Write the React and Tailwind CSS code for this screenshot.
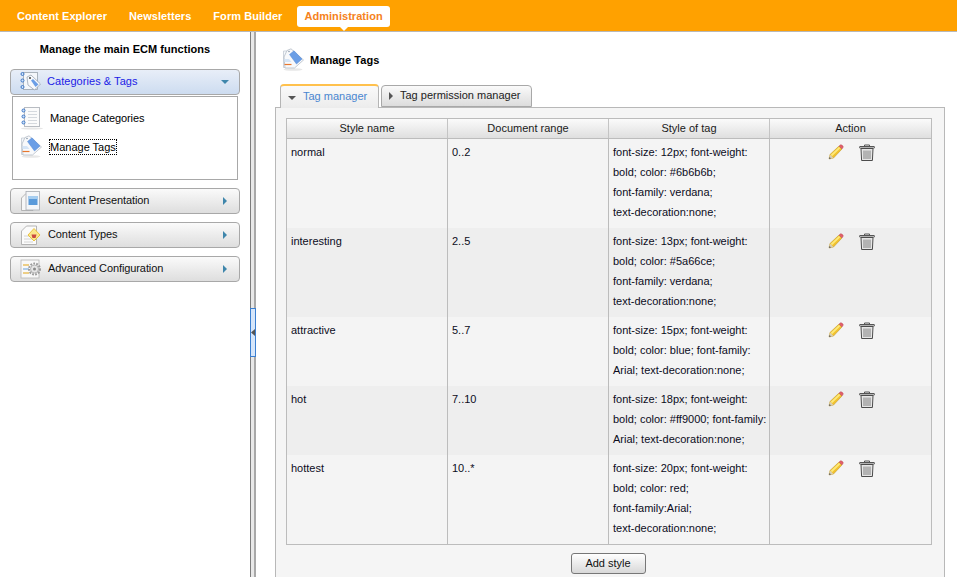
const rows = [
  { name: "normal", range: "0..2", lines: ["font-size: 12px; font-weight:", "bold; color: #6b6b6b;", "font-family: verdana;", "text-decoration:none;"], h: "h-[89px]", bg: "bg-[#f4f4f4]" },
  { name: "interesting", range: "2..5", lines: ["font-size: 13px; font-weight:", "bold; color: #5a66ce;", "font-family: verdana;", "text-decoration:none;"], h: "h-[89px]", bg: "bg-[#eeeeee]" },
  { name: "attractive", range: "5..7", lines: ["font-size: 15px; font-weight:", "bold; color: blue; font-family:", "Arial; text-decoration:none;"], h: "h-[69px]", bg: "bg-[#f4f4f4]" },
  { name: "hot", range: "7..10", lines: ["font-size: 18px; font-weight:", "bold; color: #ff9000; font-family:", "Arial; text-decoration:none;"], h: "h-[69px]", bg: "bg-[#eeeeee]" },
  { name: "hottest", range: "10..*", lines: ["font-size: 20px; font-weight:", "bold; color: red;", "font-family:Arial;", "text-decoration:none;"], h: "h-[89px]", bg: "bg-[#f4f4f4]" },
];

function TagIcon() {
  return (
    <svg width="22" height="24" viewBox="0 0 22 24" className="shrink-0">
      <ellipse cx="10" cy="21.5" rx="9.5" ry="1.3" fill="#e8e8e8" />
      <path d="M0.5 3 H6 V19.5 H0.5 Z" fill="#f4f7fb" stroke="#c3cad3" strokeWidth="0.8" />
      <path d="M4 2.5 L8 0.8 L20.5 12 L11.5 20 L2 20 L1 9 Z" fill="#f8f9fb" stroke="#b4bcc7" strokeWidth="0.8" />
      <path d="M6.5 6.5 L11 2.8 L19 11 L13.5 16 Z" fill="#6b9ee6" stroke="#5388d4" strokeWidth="0.5" />
      <path d="M1.5 11 H6 L8.5 14 H1.5 Z" fill="#d5e5f7" />
      <path d="M1.5 16.5 H8.5" stroke="#e8772e" strokeWidth="1.2" />
      <circle cx="6" cy="3.5" r="0.8" fill="#8a97a8" />
    </svg>
  );
}

function ListIcon() {
  return (
    <svg width="24" height="24" viewBox="0 0 24 24" className="shrink-0">
      <ellipse cx="12" cy="22.5" rx="11" ry="1" fill="#e6e6e6" />
      <rect x="4.5" y="1.5" width="15" height="19" fill="#fbfbfb" stroke="#b8bcc2" />
      <path d="M8 5.5H17M8 8.5H17M8 11.5H17M8 14.5H17M8 17.5H17" stroke="#d5d9de" />
      <g fill="#cfe2f8" stroke="#3d77c7">
        <circle cx="3.5" cy="4.5" r="1.5" />
        <circle cx="3.5" cy="10.5" r="1.5" />
        <circle cx="3.5" cy="16.5" r="1.5" />
      </g>
    </svg>
  );
}

function CatTagIcon() {
  return (
    <svg width="22" height="22" viewBox="0 0 22 22" className="shrink-0">
      <rect x="3.5" y="1.5" width="14" height="17" fill="#f4f7fb" stroke="#9aa3ad" strokeWidth="0.8" />
      <path d="M7 6 L11 4 L20.5 13 L14.5 19 L8 14 Z" fill="#f7f9fc" stroke="#8f9bab" strokeWidth="0.7" />
      <path d="M11 9.5 L13 8 L18.5 13.5 L15.5 16 Z" fill="#6b9ee6" />
      <circle cx="10" cy="7" r="1" fill="#444" />
      <g fill="#cfe2f8" stroke="#3d77c7">
        <circle cx="2.5" cy="3" r="1.5" />
        <circle cx="2.5" cy="9.5" r="1.5" />
        <circle cx="2.5" cy="16" r="1.5" />
      </g>
    </svg>
  );
}

function PresentIcon() {
  return (
    <svg width="22" height="22" viewBox="0 0 22 22" className="shrink-0">
      <path d="M1.5 8 L6 3.5 H13 V20.5 H1.5 Z" fill="#f7f7f7" stroke="#a5a5a5" strokeWidth="0.8" />
      <rect x="6" y="1.5" width="13.5" height="18.5" fill="#f4f6f9" stroke="#a8acb2" strokeWidth="0.8" />
      <rect x="8.5" y="6" width="9" height="9" fill="#5a9ada" />
      <rect x="8.5" y="6" width="9" height="3" fill="#a5cdf0" />
    </svg>
  );
}

function TypesIcon() {
  return (
    <svg width="22" height="22" viewBox="0 0 22 22" className="shrink-0">
      <path d="M1.5 7 L6.5 2 H16.5 V20.5 H1.5 Z" fill="#fbfbfb" stroke="#a5a5a5" strokeWidth="0.8" />
      <path d="M4 12H10M4 15H12M4 18H13" stroke="#d4d4d4" />
      <path d="M14 4.5 L20 11 L14 17 L8 11 Z" fill="#fbe68b" stroke="#e9bd33" strokeWidth="0.9" />
      <path d="M11.5 10.5 H16.5 L15.5 14 H12.5 Z" fill="#c9483f" />
    </svg>
  );
}

function ConfigIcon() {
  return (
    <svg width="22" height="22" viewBox="0 0 22 22" className="shrink-0">
      <rect x="1" y="2" width="18" height="18" fill="#f8f8f8" stroke="#b5b5b5" strokeWidth="0.8" />
      <path d="M3 7H9" stroke="#e6b23a" strokeWidth="1.2" />
      <path d="M3 11H9" stroke="#7fb0e0" strokeWidth="1.2" />
      <path d="M3 15H9" stroke="#e6b23a" strokeWidth="1.2" />
      <circle cx="14.5" cy="11" r="5.5" fill="none" stroke="#9c9c9c" strokeWidth="2" strokeDasharray="1.8 1.2" />
      <circle cx="14.5" cy="11" r="4" fill="#e6e6e6" stroke="#9c9c9c" strokeWidth="0.7" />
      <circle cx="14.5" cy="11" r="1.5" fill="#8a8a8a" />
    </svg>
  );
}

function Pencil() {
  return (
    <svg width="16" height="16" viewBox="0 0 16 16">
      <path d="M1 15 L2 10.5 L11 2 L14 5 L5.5 14 Z" fill="#f2c22e" stroke="#b98f1e" strokeWidth="0.5" />
      <path d="M2.8 10.8 L11 3 L12.3 4.3 L4 12.2 Z" fill="#fde97a" />
      <path d="M1 15 L2 10.5 L5.5 14 Z" fill="#d8cfb8" />
      <path d="M1 15 L1.5 13 L3 14.5 Z" fill="#555" />
      <path d="M11 2 L12.5 0.8 Q13.5 0.5 15 2 Q15.5 3 15 3.6 L14 5 Z" fill="#e0606c" stroke="#b94450" strokeWidth="0.4" />
    </svg>
  );
}

function Trash() {
  return (
    <svg width="16" height="17" viewBox="0 0 16 17">
      <path d="M5.5 2.5 V1 H10.5 V2.5" fill="none" stroke="#555" />
      <rect x="0.5" y="2.5" width="15" height="1.6" rx="0.5" fill="#f2f2f2" stroke="#555" />
      <path d="M2 4.5 H14 L13.4 16.5 H2.6 Z" fill="#e6e6e6" stroke="#4c4c4c" />
      <path d="M5 6.5V15M7 6.5V15M9 6.5V15M11 6.5V15" stroke="#808080" />
    </svg>
  );
}

function Arrow({ dir = "right", color = "#3f86ab" }) {
  return dir === "right" ? (
    <svg width="4" height="8" viewBox="0 0 4 8" className="shrink-0"><path d="M0 0 L4 4 L0 8 Z" fill={color} /></svg>
  ) : (
    <svg width="8" height="4" viewBox="0 0 8 4" className="shrink-0"><path d="M0 0 H8 L4 4 Z" fill={color} /></svg>
  );
}

function Accordion({ icon, label, active }) {
  return (
    <div className={`flex h-[26px] items-center rounded-[4px] border border-[#a8a8a8] pl-[9px] ${active ? "pr-[10px] bg-gradient-to-b from-[#e8eef8] to-[#cddcf0]" : "pr-[12px] bg-gradient-to-b from-[#fafafa] to-[#dedede]"}`}>
      <span className="flex h-[22px] w-[27px] shrink-0 items-center">{icon}</span>
      <span className={`grow pb-[2px] ${active ? "text-[#2020e6] tracking-[0.05px]" : "ml-px text-[#111111] tracking-[-0.1px]"}`}>{label}</span>
      <Arrow dir={active ? "down" : "right"} />
    </div>
  );
}

export default function App() {
  return (
    <div className="flex h-[577px] w-[957px] flex-col overflow-hidden bg-white text-[11px] text-black [font-family:'Liberation_Sans',Arial,sans-serif]">
      <header className="flex h-[32px] shrink-0 items-start gap-[8px] border-b border-[#b8b8b8] bg-[#ffa100] pl-[10px] pt-[6px] font-bold text-white tracking-[0.05px]">
        <span className="flex h-[21px] items-center px-[7px]">Content Explorer</span>
        <span className="flex h-[21px] items-center px-[7px]">Newsletters</span>
        <span className="flex h-[21px] items-center px-[7px]">Form Builder</span>
        <span className="relative flex h-[21px] items-center rounded-[3px] bg-white px-[7px] text-[#f58220]">
          Administration
          <span className="absolute -bottom-[4px] left-1/2 h-0 w-0 -translate-x-1/2 border-x-[4px] border-t-[4px] border-x-transparent border-t-white" />
        </span>
      </header>

      <div className="flex min-h-0 grow">
        <aside className="w-[250px] shrink-0 px-[10px]">
          <h2 className="mt-[9px] h-[16px] text-center font-bold leading-[16px] tracking-[0.04px] text-black">Manage the main ECM functions</h2>
          <div className="mt-[12px] w-[230px]">
            <Accordion active icon={<CatTagIcon />} label="Categories & Tags" />
            <div className="mx-[2px] mt-[1px] h-[84px] w-[226px] border border-[#a8a8a8] px-[7px] pt-[9px]">
              <div className="flex h-[24px] items-center gap-[5px]">
                <ListIcon />
                <span className="ml-[1px] tracking-[-0.1px]">Manage Categories</span>
              </div>
              <div className="mt-[5px] flex h-[24px] items-center gap-[6px] pl-[1px]">
                <TagIcon />
                <span className="ml-[1px] outline-1 outline-dotted outline-black leading-[14px]">Manage Tags</span>
              </div>
            </div>
            <div className="mt-[8px] flex flex-col gap-[8px]">
              <Accordion icon={<PresentIcon />} label="Content Presentation" />
              <Accordion icon={<TypesIcon />} label="Content Types" />
              <Accordion icon={<ConfigIcon />} label="Advanced Configuration" />
            </div>
          </div>
        </aside>

        <div className="relative flex w-[6px] shrink-0 border-l border-r-2 border-l-[#7c7c7c] border-r-[#a8a8a8] bg-[#e8e8e8]">
          <div className="absolute -left-px top-[276px] flex h-[49px] w-[6px] items-center border border-[#3b7fd0] bg-[#d6e6fa]">
            <svg width="4" height="7" viewBox="0 0 4 7" className="shrink-0"><path d="M4 0 V7 L0 3.5 Z" fill="#555" /></svg>
          </div>
        </div>

        <main className="min-w-0 grow pl-[19px] pr-[13px]">
          <div className="ml-[8px] mt-[16px] flex h-[24px] items-center">
            <TagIcon />
            <span className="ml-[5px] font-bold tracking-[0.05px] text-black">Manage Tags</span>
          </div>
          <div className="relative z-10 ml-[5px] mt-[11px] flex h-[24px] items-end gap-[2px]">
            <div className="relative top-px flex h-[24px] w-[99px] items-center rounded-t-[4px] border border-b-0 border-x-[#b5b5b5] border-t-2 border-t-[#ffc14d] bg-gradient-to-b from-[#fafafa] to-[#ececec] pb-[2px] pl-[7px] text-[#4a86d0]">
              <span className="pt-[4px]"><Arrow dir="down" color="#555" /></span>
              <span className="ml-[7px]">Tag manager</span>
            </div>
            <div className="flex h-[22px] w-[151px] items-center rounded-t-[4px] border border-[#a8a8a8] bg-gradient-to-b from-[#fafafa] to-[#dcdcdc] pb-[2px] pl-[7px] text-[#222222]">
              <span className="pt-[2px]"><Arrow color="#555" /></span>
              <span className="ml-[7px]">Tag permission manager</span>
            </div>
          </div>
          <section className="h-[500px] w-[670px] border border-[#b8b8b8] bg-[#f5f5f5] pl-[10px] pt-[10px]">
            <div className="w-[646px] border border-[#bcbcbc] bg-[#f4f4f4]">
              <div className="grid h-[20px] grid-cols-[161px_161px_161px_161px] items-center border-b border-[#bcbcbc] bg-gradient-to-b from-[#fbfbfb] to-[#dfdfdf] text-center text-[#1a1a1a]">
                <div className="flex h-full items-center justify-center border-r border-[#c4c4c4]">Style name</div>
                <div className="flex h-full items-center justify-center border-r border-[#c4c4c4]">Document range</div>
                <div className="flex h-full items-center justify-center border-r border-[#c4c4c4]">Style of tag</div>
                <div className="flex h-full items-center justify-center">Action</div>
              </div>
              {rows.map((r) => (
                <div key={r.name} className={`grid grid-cols-[161px_161px_161px_161px] ${r.h} ${r.bg}`}>
                  <div className="border-r border-[#bcbcbc] pl-[4px] pt-[6px] leading-[14px] text-[#0c0c1c]">{r.name}</div>
                  <div className="border-r border-[#bcbcbc] pl-[4px] pt-[6px] leading-[14px] text-[#0c0c1c]">{r.range}</div>
                  <div className="border-r border-[#bcbcbc] pl-[4px] pt-[3px] leading-[20px] text-[#0c0c1c]">
                    {r.lines.map((l) => (
                      <div key={l} className="whitespace-nowrap">{l}</div>
                    ))}
                  </div>
                  <div className="flex items-start pl-[58px] pt-[5px]">
                    <Pencil />
                    <span className="ml-[15px]"><Trash /></span>
                  </div>
                </div>
              ))}
            </div>
            <div className="mt-[8px] flex justify-center pr-[14px]">
              <button className="h-[21px] w-[75px] rounded-[3px] border border-[#777777] bg-gradient-to-b from-[#ffffff] to-[#d8d8d8] text-[11px] text-[#111111]">Add style</button>
            </div>
          </section>
        </main>
      </div>
    </div>
  );
}
